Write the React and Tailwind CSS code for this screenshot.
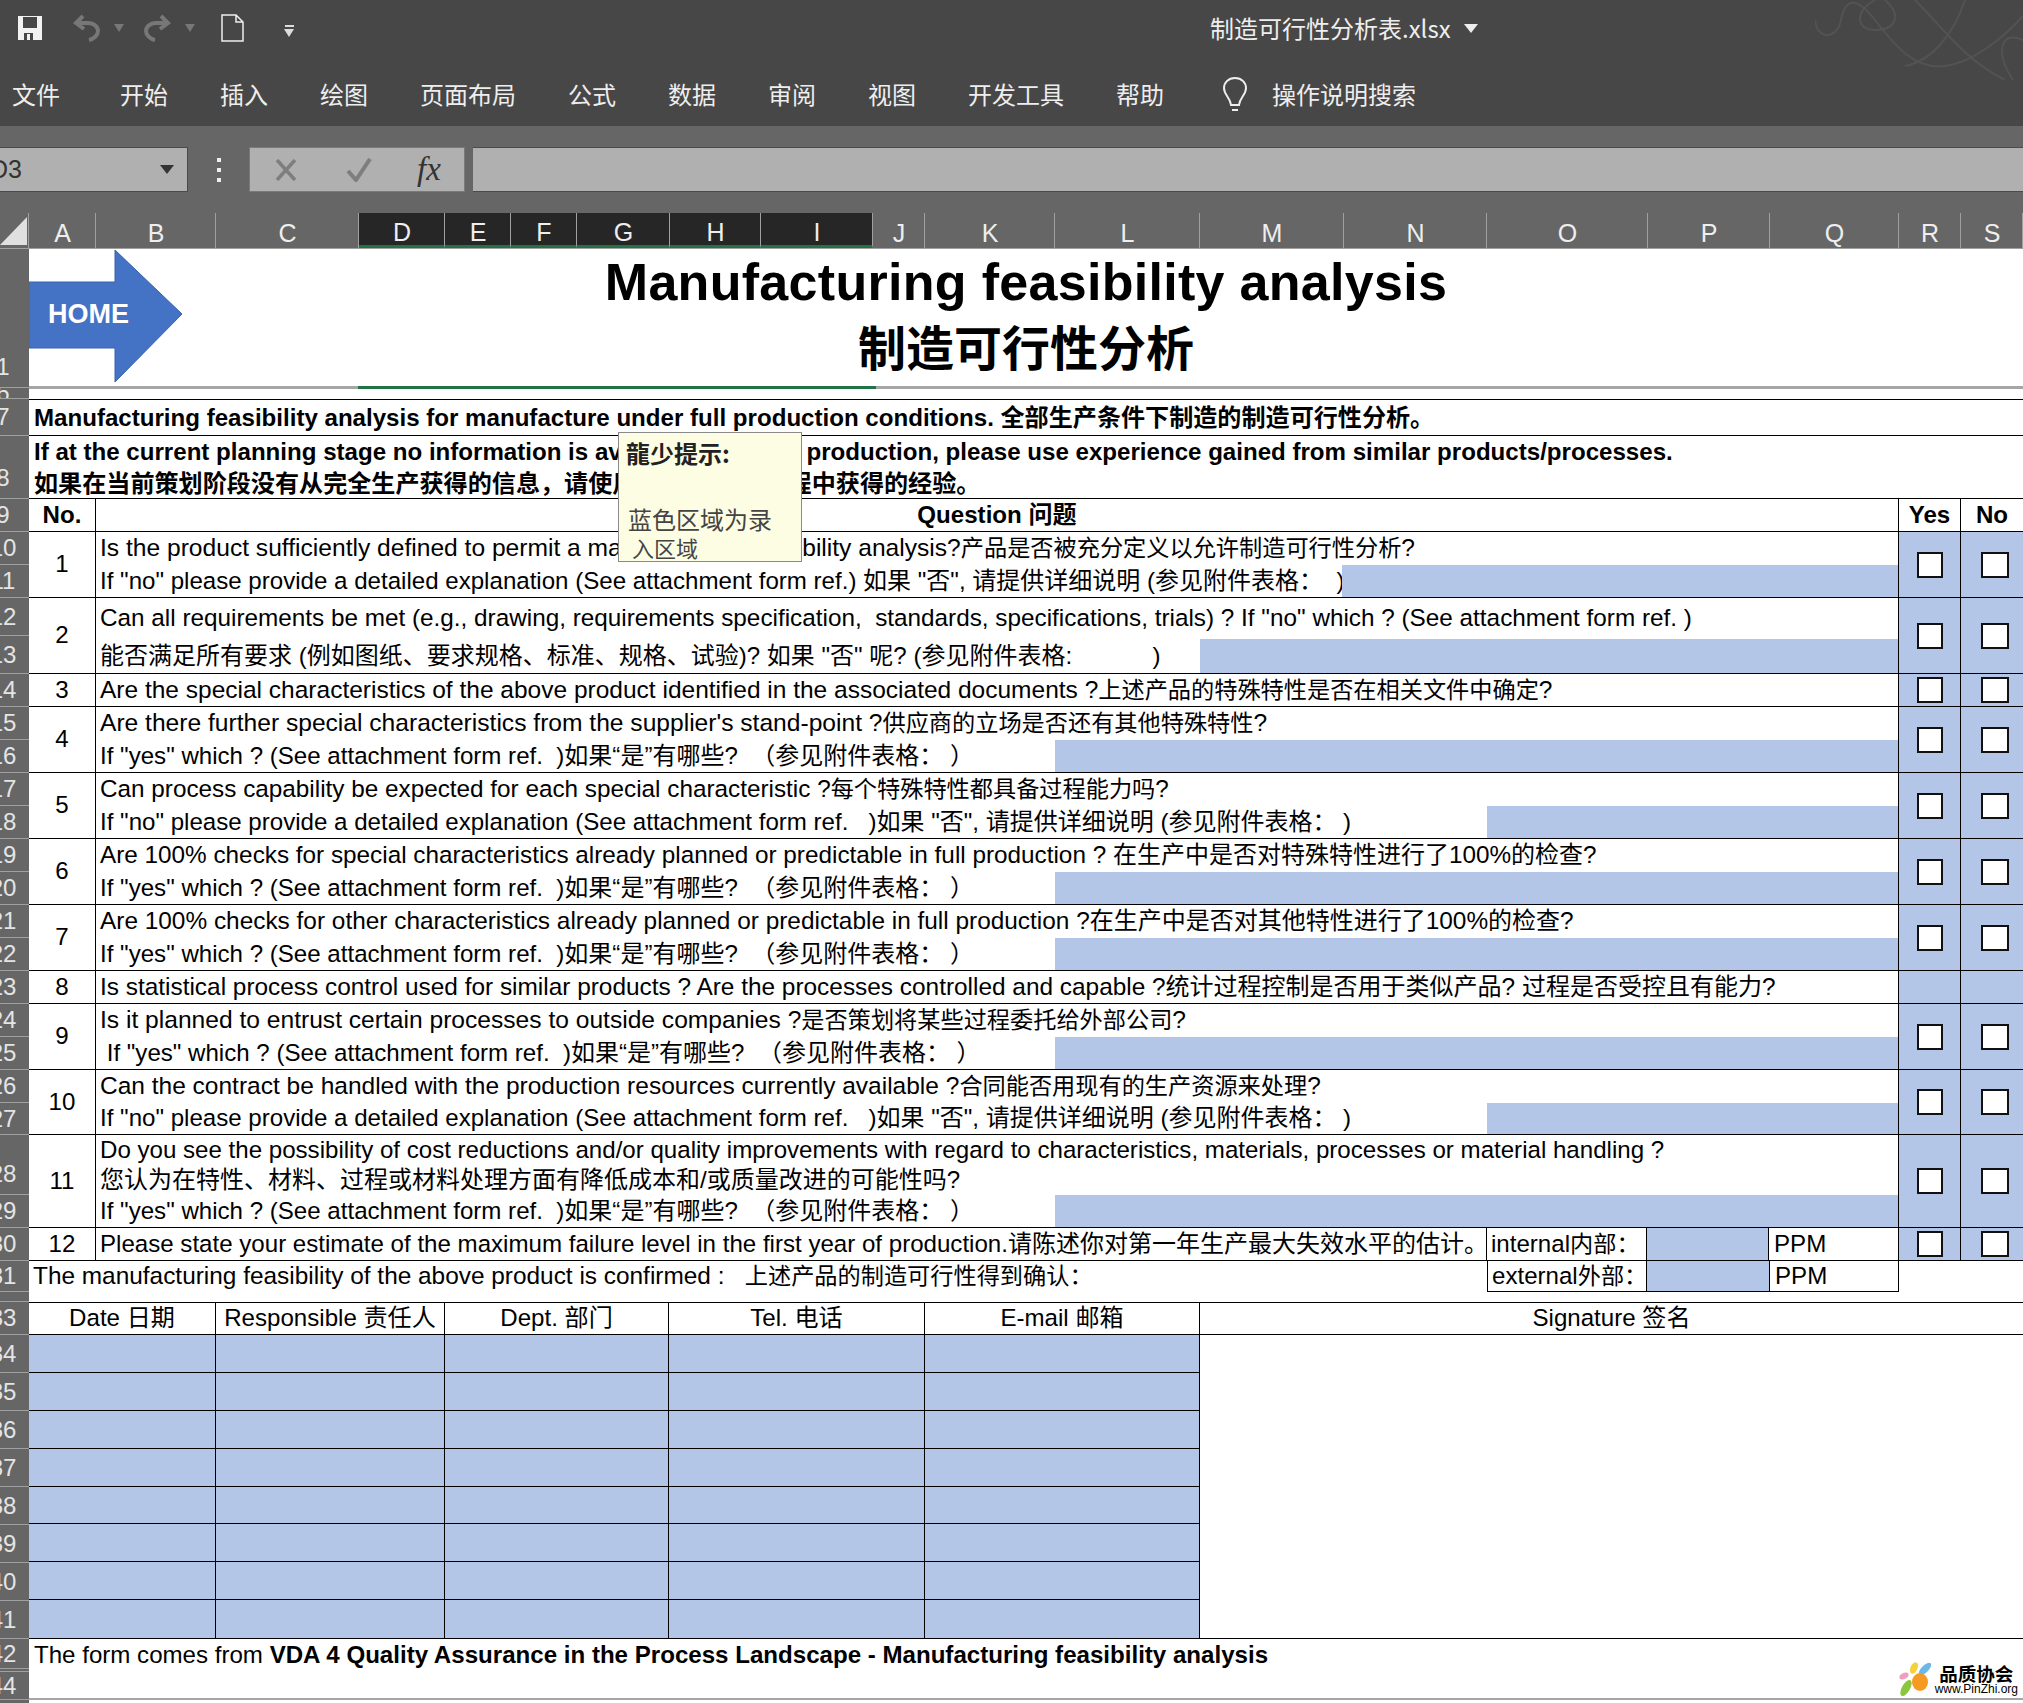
import React from "react";

const tabs = ["开始", "插入", "绘图", "页面布局", "公式", "数据", "审阅", "视图", "开发工具", "帮助"];

const columns = [
  { name: "A", w: "w-[67px]" },
  { name: "B", w: "w-[120px]" },
  { name: "C", w: "w-[143px]" },
  { name: "D", w: "w-[86px]", active: true },
  { name: "E", w: "w-[66px]", active: true },
  { name: "F", w: "w-[66px]", active: true },
  { name: "G", w: "w-[93px]", active: true },
  { name: "H", w: "w-[91px]", active: true },
  { name: "I", w: "w-[112px]", active: true },
  { name: "J", w: "w-[52px]" },
  { name: "K", w: "w-[130px]" },
  { name: "L", w: "w-[145px]" },
  { name: "M", w: "w-[144px]" },
  { name: "N", w: "w-[143px]" },
  { name: "O", w: "w-[161px]" },
  { name: "P", w: "w-[122px]" },
  { name: "Q", w: "w-[129px]" },
  { name: "R", w: "w-[62px]" },
  { name: "S", w: "w-[62px]" },
];

const rowLabels = [
  { label: "1", h: "h-[139px]", end: true },
  { label: "6", h: "h-[11px]" },
  { label: "7", h: "h-[37px]" },
  { label: "8", h: "h-[63px]", end: true },
  { label: "9", h: "h-[33px]" },
  { label: "10", h: "h-[33px]" },
  { label: "11", h: "h-[33px]" },
  { label: "12", h: "h-[38px]" },
  { label: "13", h: "h-[38px]" },
  { label: "14", h: "h-[33px]" },
  { label: "15", h: "h-[33px]" },
  { label: "16", h: "h-[33px]" },
  { label: "17", h: "h-[33px]" },
  { label: "18", h: "h-[33px]" },
  { label: "19", h: "h-[33px]" },
  { label: "20", h: "h-[33px]" },
  { label: "21", h: "h-[33px]" },
  { label: "22", h: "h-[33px]" },
  { label: "23", h: "h-[33px]" },
  { label: "24", h: "h-[33px]" },
  { label: "25", h: "h-[33px]" },
  { label: "26", h: "h-[33px]" },
  { label: "27", h: "h-[32px]" },
  { label: "28", h: "h-[60px]", end: true },
  { label: "29", h: "h-[33px]" },
  { label: "30", h: "h-[33px]" },
  { label: "31", h: "h-[31px]" },
  { label: "", h: "h-[10px]" },
  { label: "33", h: "h-[33px]" },
  { label: "34", h: "h-[38px]" },
  { label: "35", h: "h-[38px]" },
  { label: "36", h: "h-[38px]" },
  { label: "37", h: "h-[38px]" },
  { label: "38", h: "h-[38px]" },
  { label: "39", h: "h-[38px]" },
  { label: "40", h: "h-[38px]" },
  { label: "41", h: "h-[38px]" },
  { label: "42", h: "h-[30px]" },
  { label: "", h: "h-[3px]" },
  { label: "44", h: "h-[28px]" },
];

const ifYes = 'If "yes" which ? (See attachment form ref.  )如果“是”有哪些?  （参见附件表格： ）';
const ifNo = 'If "no" please provide a detailed explanation (See attachment form ref.   )如果 "否", 请提供详细说明 (参见附件表格： )';

const questions = [
  {
    no: "1",
    lines: [
      { text: "Is the product sufficiently defined to permit a manufacturing feasibility analysis?产品是否被充分定义以允许制造可行性分析?", h: "h-[33px]", size: "text-[24.6px]", small: true },
      { text: 'If "no" please provide a detailed explanation (See attachment form ref.) 如果 "否", 请提供详细说明 (参见附件表格：  )', h: "h-[32px]", blank: "w-[1246px]" },
    ],
  },
  {
    no: "2",
    lines: [
      { text: 'Can all requirements be met (e.g., drawing, requirements specification,  standards, specifications, trials) ? If "no" which ? (See attachment form ref. )', h: "h-[41px]", size: "text-[24.3px]" },
      { text: '能否满足所有要求 (例如图纸、要求规格、标准、规格、试验)? 如果 "否" 呢? (参见附件表格:            )', h: "h-[34px]", blank: "w-[1104px]" },
    ],
  },
  {
    no: "3",
    lines: [{ text: "Are the special characteristics of the above product identified in the associated documents ?上述产品的特殊特性是否在相关文件中确定?", h: "h-[32px]", size: "text-[24.5px]", small: true }],
  },
  {
    no: "4",
    lines: [
      { text: "Are there further special characteristics from the supplier's stand-point ?供应商的立场是否还有其他特殊特性?", h: "h-[33px]", size: "text-[24.6px]", small: true },
      { text: ifYes, h: "h-[32px]", blank: "w-[959px]" },
    ],
  },
  {
    no: "5",
    lines: [
      { text: "Can process capability be expected for each special characteristic ?每个特殊特性都具备过程能力吗?", h: "h-[33px]", size: "text-[24.3px]", small: true },
      { text: ifNo, h: "h-[32px]", blank: "w-[1391px]" },
    ],
  },
  {
    no: "6",
    lines: [
      { text: "Are 100% checks for special characteristics already planned or predictable in full production ? 在生产中是否对特殊特性进行了100%的检查?", h: "h-[33px]", size: "text-[24.3px]" },
      { text: ifYes, h: "h-[32px]", blank: "w-[959px]" },
    ],
  },
  {
    no: "7",
    lines: [
      { text: "Are 100% checks for other characteristics already planned or predictable in full production ?在生产中是否对其他特性进行了100%的检查?", h: "h-[33px]", size: "text-[24.4px]" },
      { text: ifYes, h: "h-[32px]", blank: "w-[959px]" },
    ],
  },
  {
    no: "8",
    noBoxes: true,
    lines: [{ text: "Is statistical process control used for similar products ? Are the processes controlled and capable ?统计过程控制是否用于类似产品? 过程是否受控且有能力?", h: "h-[32px]", size: "text-[24.4px]" }],
  },
  {
    no: "9",
    lines: [
      { text: "Is it planned to entrust certain processes to outside companies ?是否策划将某些过程委托给外部公司?", h: "h-[33px]", size: "text-[24.6px]", small: true },
      { text: ' If "yes" which ? (See attachment form ref.  )如果“是”有哪些?  （参见附件表格： ）', h: "h-[32px]", blank: "w-[959px]" },
    ],
  },
  {
    no: "10",
    lines: [
      { text: "Can the contract be handled with the production resources currently available ?合同能否用现有的生产资源来处理?", h: "h-[33px]", size: "text-[24.5px]", small: true },
      { text: ifNo, h: "h-[31px]", blank: "w-[1391px]" },
    ],
  },
  {
    no: "11",
    lines: [
      { text: "Do you see the possibility of cost reductions and/or quality improvements with regard to characteristics, materials, processes or material handling ?", h: "h-[30px]" },
      { text: "您认为在特性、材料、过程或材料处理方面有降低成本和/或质量改进的可能性吗?", h: "h-[30px]" },
      { text: ifYes, h: "h-[32px]", blank: "w-[959px]" },
    ],
  },
];

const signColumns = ["w-[187px]", "w-[229px]", "w-[224px]", "w-[256px]", "w-[275px]"];

// latin and chinese runs sit at slightly different sizes in the sheet
function Mixed({ text, small }) {
  const parts = text.split(/([\u3000-\u303f\u4e00-\u9fff\uff00-\uffef]+)/);
  return parts.map((part, i) =>
    i % 2 === 1 ? (
      <span key={i} className={small ? "text-[23.2px]" : "text-[24px]"}>{part}</span>
    ) : (
      <span key={i}>{part}</span>
    )
  );
}

function CheckBox({ no }) {
  return (
    <div className={`${no ? "w-[62px] pl-[5px]" : "w-[62px] pl-[1px] border-r border-black"} flex items-center justify-center bg-[#b4c6e7]`}>
      <div className={`${no ? "w-[28px]" : "w-[26px]"} h-[26px] border-2 border-[#111] bg-white`} />
    </div>
  );
}

function EmptyBlue({ line }) {
  return <div className={`w-[62px] bg-[#b4c6e7] ${line ? "border-r border-black" : ""}`} />;
}

function QuestionRow({ q }) {
  return (
    <div className="flex border-b border-black">
      <div className="w-[67px] border-r border-black flex items-center justify-center leading-none">{q.no}</div>
      <div className="flex-1 flex flex-col">
        {q.lines.map((line, i) => (
          <div key={i} className={`${line.h} flex items-center`}>
            <div className={`${line.blank ? line.blank : "flex-1"} shrink-0 pl-[4px] whitespace-pre ${line.size || ""}`}>
              <Mixed text={line.text} small={line.small} />
            </div>
            {line.blank && <div className="flex-1 self-stretch bg-[#b4c6e7]" />}
          </div>
        ))}
      </div>
      <div className="w-px bg-black" />
      {q.noBoxes ? <EmptyBlue line /> : <CheckBox />}
      {q.noBoxes ? <EmptyBlue /> : <CheckBox no />}
    </div>
  );
}

function SaveIcon() {
  return (
    <svg width="26" height="26" viewBox="0 0 26 26">
      <path d="M1 1h24v24H1z" fill="#f2f2f2" />
      <path d="M6 2h14v11H6z" fill="#474747" />
      <path d="M7 18h9v7H7z" fill="#474747" />
      <path d="M10 19h3v6h-3z" fill="#f2f2f2" />
    </svg>
  );
}

function UndoIcon({ flip }) {
  return (
    <svg width="29" height="28" viewBox="0 0 29 28" className={flip ? "-scale-x-100" : ""}>
      <path d="M10 2L3 9l8 6" fill="none" stroke="#777" strokeWidth="4" />
      <path d="M4 9h11c6 0 10 4 10 8s-4 8-9 9" fill="none" stroke="#777" strokeWidth="4" />
    </svg>
  );
}

function Caret({ color, big }) {
  return (
    <svg width={big ? 14 : 10} height={big ? 9 : 8} viewBox="0 0 10 8" preserveAspectRatio="none">
      <path d="M0 0h10L5 8z" fill={color} />
    </svg>
  );
}

function Logo() {
  return (
    <div className="absolute right-[5px] bottom-[2px] flex items-center gap-[1px]">
      <svg width="36" height="34" viewBox="0 0 34 34">
        <ellipse cx="26" cy="7" rx="3.5" ry="8" transform="rotate(45 26 7)" fill="#6db8e6" />
        <ellipse cx="15" cy="6" rx="3.5" ry="6" transform="rotate(25 15 6)" fill="#f5d13c" />
        <ellipse cx="5" cy="14" rx="5" ry="3" transform="rotate(-25 5 14)" fill="#eda0bd" />
        <ellipse cx="21" cy="20" rx="8" ry="9" fill="#f59a23" />
        <ellipse cx="7" cy="26" rx="4" ry="9" transform="rotate(30 7 26)" fill="#8cc63f" />
      </svg>
      <div className="flex flex-col items-center leading-none text-black">
        <span className="font-['Noto_Sans_CJK_SC',sans-serif] font-bold text-[18.5px] leading-[20px]">品质协会</span>
        <span className="font-['Liberation_Sans',sans-serif] text-[12px] leading-[13px]">www.PinZhi.org</span>
      </div>
    </div>
  );
}

export default function App() {
  return (
    <div className="w-[2023px] h-[1703px] overflow-hidden bg-white flex flex-col font-['Liberation_Sans','Noto_Sans_CJK_SC',sans-serif] text-[24.1px] text-black">
      {/* title bar and ribbon tabs */}
      <div className="relative h-[126px] bg-[#474747] text-[#eeeeee]">
        <svg className="absolute right-0 top-0" width="208" height="80" viewBox="0 0 208 80" fill="none" stroke="#535353" strokeWidth="2">
          <path d="M0 20c2 20 22 20 26 0S40-6 60 20s40 50 70 46 60-30 78-50" />
          <path d="M60 0c-20 10-20 30 0 30s28-14 10-30" />
          <path d="M100 0c30 30 50 60 90 80" />
          <path d="M208 40c-20-10-30 10-10 40" />
          <path d="M150 0c-10 30-30 60-60 66" />
        </svg>
        <div className="h-[56px] flex items-center pl-[17px]">
          <SaveIcon />
          <div className="ml-[30px]"><UndoIcon /></div>
          <div className="ml-[12px]"><Caret color="#777" /></div>
          <div className="ml-[18px]"><UndoIcon flip /></div>
          <div className="ml-[14px]"><Caret color="#777" /></div>
          <svg className="ml-[26px]" width="23" height="28" viewBox="0 0 23 28" fill="none" stroke="#eee" strokeWidth="1.5">
            <path d="M1 1h14l7 7v19H1zM15 1v7h7" />
          </svg>
          <div className="ml-[40px] mt-[6px] flex flex-col items-center gap-[2px]">
            <div className="w-[9px] h-[2px] bg-[#ddd]" />
            <Caret color="#ddd" />
          </div>
          <div className="ml-[916px] text-[24px] font-['Noto_Sans_CJK_SC',sans-serif] leading-none whitespace-nowrap">制造可行性分析表.xlsx</div>
          <div className="ml-[13px]"><Caret color="#eee" big /></div>
        </div>
        <div className="h-[70px] flex items-center pt-[6px] pl-[12px] text-[24px] font-['Noto_Sans_CJK_SC',sans-serif]">
          <span className="mr-[60px]">文件</span>
          <div className="flex gap-[52px]">
            {tabs.map((tab) => (
              <span key={tab}>{tab}</span>
            ))}
          </div>
          <svg className="ml-[58px]" width="26" height="34" viewBox="0 0 26 34" fill="none" stroke="#eee" strokeWidth="2">
            <path d="M13 1C6 1 2 6 2 11c0 7 6 9 7 17h8c1-8 7-10 7-17 0-5-4-10-11-10zM10 33h6" />
          </svg>
          <span className="ml-[24px]">操作说明搜索</span>
        </div>
      </div>

      {/* formula bar */}
      <div className="h-[87px] bg-[#666666] flex items-start pt-[21px]">
        <div className="w-[188px] h-[45px] bg-[#b0b0b0] border-y border-r border-[#4a4a4a] flex items-center justify-between pr-[13px] overflow-hidden">
          <span className="-ml-[10px] text-[25px] text-[#333]">D3</span>
          <Caret color="#333" big />
        </div>
        <div className="w-[61px] h-[45px] flex flex-col items-center justify-center gap-[6px]">
          <div className="w-[4px] h-[4px] bg-[#eee]" />
          <div className="w-[4px] h-[4px] bg-[#eee]" />
          <div className="w-[4px] h-[4px] bg-[#eee]" />
        </div>
        <div className="w-[216px] h-[45px] bg-[#b0b0b0] border border-[#7a7a7a] flex items-center text-[#777]">
          <svg className="ml-[25px]" width="22" height="22" viewBox="0 0 22 22" fill="none" stroke="#7e7e7e" strokeWidth="3.5">
            <path d="M2 1l18 20M20 1L2 21" />
          </svg>
          <svg className="ml-[49px]" width="26" height="24" viewBox="0 0 26 24" fill="none" stroke="#7e7e7e" strokeWidth="4">
            <path d="M2 13l8 9L24 1" />
          </svg>
          <span className="ml-[45px] font-['Liberation_Serif',serif] italic text-[33px] leading-none text-[#333]">fx</span>
        </div>
        <div className="ml-[8px] flex-1 h-[45px] bg-[#b0b0b0] border-y border-[#4a4a4a]" />
      </div>

      {/* column headers */}
      <div className="h-[36px] bg-[#666666] flex text-[#eeeeee] text-[25px] leading-none border-b border-[#a0a0a0]">
        <div className="w-[29px] flex items-end border-r border-[#a0a0a0] pb-[3px]">
          <svg width="27" height="28" viewBox="0 0 27 28">
            <path d="M27 0v28H0z" fill="#e0e0e0" />
          </svg>
        </div>
        {columns.map((col) => (
          <div
            key={col.name}
            className={`${col.w} flex items-center justify-center pt-[6px] pl-[1px] border-r border-[#a0a0a0] ${col.active ? "bg-[#262626] border-b-[3px] border-b-[#217346]" : ""}`}
          >
            {col.name}
          </div>
        ))}
      </div>

      {/* sheet */}
      <div className="flex-1 flex min-h-0">
        <div className="w-[29px] shrink-0 bg-[#666666] overflow-hidden flex flex-col text-[#e4e4e4] text-[24px] leading-none">
          {rowLabels.map((row, i) => (
            <div key={i} className={`${row.h} shrink-0 border-b border-[#a0a0a0] overflow-hidden flex ${row.end ? "items-end pb-[8px]" : "items-center"}`}>
              <span className="w-[52px] -ml-[23px] shrink-0 text-center">{row.label}</span>
            </div>
          ))}
        </div>

        <div className="relative flex-1 flex flex-col min-w-0 *:shrink-0">
          {/* heading */}
          <div className="relative h-[150px] flex flex-col">
            <div className="h-[139px] flex flex-col items-center pt-[4px] font-bold">
              <div className="text-[52px] leading-[58px] tracking-[0.3px] whitespace-nowrap">Manufacturing feasibility analysis</div>
              <div className="mt-[2px] text-[48px] leading-[64px] font-['Noto_Sans_CJK_SC',sans-serif] font-bold">制造可行性分析</div>
            </div>
            <div className="h-[3px] -mt-[2px] bg-[#a6a6a6] flex">
              <div className="ml-[329px] w-[518px] bg-[#217346]" />
            </div>
            <div className="absolute left-0 top-0 w-[153px] h-[134px]">
              <svg className="w-full h-full" viewBox="0 0 153 134">
                <path d="M0 33h86V1l67 64-67 68V99H0z" fill="#4472c4" stroke="#3a62a8" />
              </svg>
              <span className="absolute left-[19px] top-[49px] text-[27px] leading-[32px] font-bold text-white">HOME</span>
            </div>
          </div>

          <div className="h-[37px] border-y border-black flex items-center pl-[5px] pt-[1px] font-bold whitespace-pre">
            Manufacturing feasibility analysis for manufacture under full production conditions. 全部生产条件下制造的制造可行性分析。
          </div>
          <div className="h-[63px] border-b border-black flex flex-col justify-center pl-[5px] pt-[1px] font-bold whitespace-pre leading-[32px]">
            <div>If at the current planning stage no information is available from full production, please use experience gained from similar products/processes.</div>
            <div>如果在当前策划阶段没有从完全生产获得的信息，请使用从类似产品/过程中获得的经验。</div>
          </div>

          {/* question table */}
          <div className="h-[33px] flex border-b border-black font-bold leading-none">
            <div className="w-[67px] border-r border-black flex items-center justify-center">No.</div>
            <div className="flex-1 border-r border-black flex items-center justify-center">Question 问题</div>
            <div className="w-[62px] border-r border-black flex items-center justify-center">Yes</div>
            <div className="w-[62px] flex items-center justify-center">No</div>
          </div>
          {questions.map((q) => (
            <QuestionRow key={q.no} q={q} />
          ))}

          <div className="h-[33px] flex border-b border-black">
            <div className="w-[67px] border-r border-black flex items-center justify-center">12</div>
            <div className="w-[1391px] border-r border-black flex items-center pl-[4px] whitespace-pre">
              <Mixed text="Please state your estimate of the maximum failure level in the first year of production.请陈述你对第一年生产最大失效水平的估计。" />
            </div>
            <div className="w-[160px] border-r border-black flex items-center pl-[4px] whitespace-pre"><Mixed text="internal内部：" small /></div>
            <div className="w-[122px] border-r border-black bg-[#b4c6e7]" />
            <div className="w-[130px] border-r border-black flex items-center pl-[5px]">PPM</div>
            <CheckBox />
            <CheckBox no />
          </div>
          <div className="h-[31px] flex">
            <div className="w-[1458px] flex items-center pl-[4px] whitespace-pre text-[24.4px]">
              <Mixed text="The manufacturing feasibility of the above product is confirmed :   上述产品的制造可行性得到确认：" small />
            </div>
            <div className="w-[160px] border-x border-b border-black flex items-center pl-[4px] whitespace-pre"><Mixed text="external外部：" small /></div>
            <div className="w-[122px] border-b border-black bg-[#b4c6e7]" />
            <div className="w-[130px] border-x border-b border-black flex items-center pl-[5px]">PPM</div>
          </div>
          <div className="h-[10px]" />

          {/* sign off table */}
          <div className="h-[33px] flex border-y border-black">
            {["Date 日期", "Responsible 责任人", "Dept. 部门", "Tel. 电话", "E-mail 邮箱"].map((title, i) => (
              <div key={title} className={`${signColumns[i]} border-r border-black flex items-center justify-center whitespace-nowrap`}>
                {title}
              </div>
            ))}
            <div className="flex-1 flex items-center justify-center">Signature 签名</div>
          </div>
          <div className="h-[304px] flex border-b border-black">
            <div className="flex flex-col">
              {[0, 1, 2, 3, 4, 5, 6, 7].map((r) => (
                <div key={r} className={`h-[38px] flex bg-[#b4c6e7] ${r < 7 ? "border-b border-black" : ""}`}>
                  {signColumns.map((w) => (
                    <div key={w} className={`${w} border-r border-black`} />
                  ))}
                </div>
              ))}
            </div>
          </div>
          <div className="relative h-[61px] pt-[1px] pl-[5px] leading-[30px] border-b-2 border-[#a6a6a6] whitespace-pre">
            The form comes from <b>VDA 4 Quality Assurance in the Process Landscape - Manufacturing feasibility analysis</b>
            <Logo />
          </div>

          {/* comment popup over the sheet */}
          <div className="absolute left-[589px] top-[183px] w-[184px] h-[130px] bg-[#fdfde3] border border-[#8a8a8a] overflow-hidden pl-[7px] pr-[4px] pt-[4px] text-[24px] leading-[32px] text-[#444] font-['Noto_Sans_CJK_SC',sans-serif]">
            <div className="font-bold text-[#222]">龍少提示:</div>
            <div className="h-[34px]" />
            <div className="pl-[2px]">蓝色区域为录</div>
            <div className="pl-[6px] text-[22px] leading-[24px]">入区域</div>
          </div>
        </div>
      </div>
    </div>
  );
}
